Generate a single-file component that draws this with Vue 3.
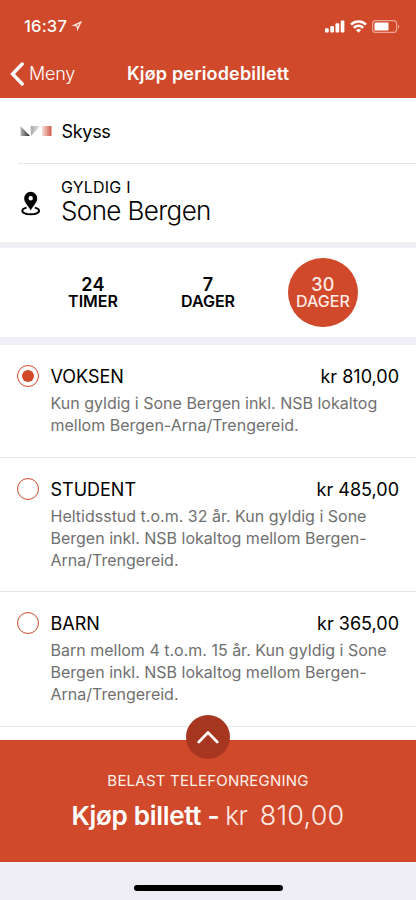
<script setup>
import { ref, computed } from 'vue'

const periods = [
  { n: '24', unit: 'TIMER' },
  { n: '7', unit: 'DAGER' },
  { n: '30', unit: 'DAGER' },
]
const period = ref(2)

const options = [
  { id: 'voksen', name: 'VOKSEN', price: '810,00', lines: ['Kun gyldig i Sone Bergen inkl. NSB lokaltog', 'mellom Bergen-Arna/Trengereid.'] },
  { id: 'student', name: 'STUDENT', price: '485,00', lines: ['Heltidsstud t.o.m. 32 år. Kun gyldig i Sone', 'Bergen inkl. NSB lokaltog mellom Bergen-', 'Arna/Trengereid.'] },
  { id: 'barn', name: 'BARN', price: '365,00', lines: ['Barn mellom 4 t.o.m. 15 år. Kun gyldig i Sone', 'Bergen inkl. NSB lokaltog mellom Bergen-', 'Arna/Trengereid.'] },
]
const selected = ref('voksen')
const total = computed(() => options.find((o) => o.id === selected.value).price)
</script>

<template>
  <div class="screen">
    <header class="header">
      <div class="status">
        <span class="time">16:37</span>
        <svg class="loc" width="12" height="12" viewBox="0 0 12 12"><path d="M11.2.8.4 5.8l5.200.6.6 5z" fill="#fbe0d8" /><path d="M8.300 3.700 5.300 5.200l1.200.3.3 1.200z" fill="#d1492b" /></svg>
        <span class="spacer"></span>
        <svg class="signal" width="20" height="13" viewBox="0 0 20 13" fill="#fff">
          <rect x="0" y="8.2" width="3.7" height="4.4" rx="1" /><rect x="5.3" y="6" width="3.7" height="6.6" rx="1" /><rect x="10.5" y="3.2" width="3.7" height="9.4" rx="1" /><rect x="15.7" y=".5" width="3.7" height="12.1" rx="1" />
        </svg>
        <svg class="wifi" width="17" height="13" viewBox="0 0 17 13" fill="none" stroke="#fff" stroke-width="2.5">
          <path d="M1 4.6a10.7 10.7 0 0 1 15 0" /><path d="M3.8 7.8a6.7 6.7 0 0 1 9.4 0" /><path d="M5.9 10.1a3.8 3.8 0 0 1 5.2 0L8.5 12.7z" fill="#fff" stroke="none" />
        </svg>
        <svg class="battery" width="28" height="13" viewBox="0 0 28 13">
          <rect x=".6" y=".6" width="24" height="11.8" rx="3" fill="none" stroke="#eba795" stroke-width="1.1" /><rect x="2.5" y="2.4" width="14" height="8.2" rx="1.2" fill="#fff" /><path d="M26 4.4c1.6.6 1.6 3.6 0 4.2z" fill="#eba795" />
        </svg>
      </div>
      <nav class="nav">
        <button class="back">
          <svg width="14" height="24" viewBox="0 0 14 24" fill="none" stroke="#fff" stroke-width="3.4" stroke-linecap="round" stroke-linejoin="miter"><path d="M12.200 2 2.600 12l9.600 10" /></svg>
          <span>Meny</span>
        </button>
        <h1>Kjøp periodebillett</h1>
      </nav>
    </header>

    <section class="info">
      <div class="operator">
        <svg width="32" height="10" viewBox="0 0 32 10">
          <defs>
            <linearGradient id="ga"><stop offset="0" stop-color="#bbb" /><stop offset="1" stop-color="#222" /></linearGradient>
            <linearGradient id="gb"><stop offset="0" stop-color="#aaa" /><stop offset="1" stop-color="#e4e4e4" /></linearGradient>
            <linearGradient id="gc"><stop offset="0" stop-color="#f8dfda" /><stop offset="1" stop-color="#d1594a" /></linearGradient>
          </defs>
          <path d="M.5 0 10 10H.5z" fill="url(#ga)" /><path d="M10.5 0H20l-9 10z" fill="url(#gb)" /><rect x="22" y="0" width="9.5" height="10" fill="url(#gc)" />
        </svg>
        <span class="operator-name">Skyss</span>
      </div>
      <div class="zone">
        <svg width="20" height="25" viewBox="0 0 20 25">
          <path d="M5.6 16.6C3 17.2 1.3 18.4 1.3 19.8c0 2.1 3.8 3.5 8.4 3.5s8.4-1.4 8.4-3.5c0-1.4-1.7-2.6-4.3-3.2" fill="none" stroke="#000" stroke-width="1.9" />
          <path fill-rule="evenodd" d="M9.7.8a6.5 6.5 0 0 0-6.5 6.5c0 4.6 4.2 7.3 6.5 12.2 2.3-4.9 6.5-7.6 6.5-12.2A6.5 6.5 0 0 0 9.7.8zm0 4.2a2.2 2.2 0 1 1 0 4.4 2.2 2.2 0 0 1 0-4.4z" />
        </svg>
        <div class="zone-text">
          <span class="zone-label">GYLDIG I</span>
          <span class="zone-name">Sone Bergen</span>
        </div>
      </div>
    </section>

    <section class="periods">
      <button v-for="(p, i) in periods" :key="i" :class="['period', { active: period === i }]" @click="period = i">
        <span class="num">{{ p.n }}</span>
        <span class="unit">{{ p.unit }}</span>
      </button>
    </section>

    <main class="options">
      <article v-for="o in options" :key="o.id" class="option" @click="selected = o.id">
        <span :class="['radio', { on: selected === o.id }]"></span>
        <div class="body">
          <div class="line"><span>{{ o.name }}</span><span>kr {{ o.price }}</span></div>
          <div v-for="l in o.lines" :key="l" class="desc">{{ l }}</div>
        </div>
      </article>
    </main>

    <footer class="buy">
      <button class="expand">
        <svg width="22" height="14" viewBox="0 0 22 14" fill="none" stroke="#fff" stroke-width="2.7" stroke-linecap="round" stroke-linejoin="round"><path d="M1.8 12 11 2.5 20.2 12" /></svg>
      </button>
      <span class="method">BELAST TELEFONREGNING</span>
      <div class="total"><span class="buy-label">Kjøp billett -</span><span class="currency">kr</span><span class="sum">{{ total }}</span></div>
    </footer>
    <div class="home"><span class="bar"></span></div>
  </div>
</template>

<style>
body { margin: 0; }
</style>

<style scoped>
.screen { width: 416px; height: 900px; display: flex; flex-direction: column; background: #fff; color: #000; font-family: Inter, "Liberation Sans", sans-serif; overflow: hidden; white-space: nowrap; }
button { border: 0; padding: 0; margin: 0; background: none; font: inherit; color: inherit; }
svg { display: block; flex: none; }
.header { height: 97.5px; flex: none; background: #d1492b; color: #fff; }
.status { height: 20px; padding: 16px 16px 0 24px; display: flex; align-items: center; }
.time { font-size: 16.5px; font-weight: 550; letter-spacing: 0.2px; }
.loc { margin-left: 4px; }
.spacer { flex: 1; }
.wifi, .battery { margin-left: 5px; }
.nav { height: 44px; margin-top: 15.5px; display: grid; grid-template-columns: 127px 1fr; align-items: center; }
.back { display: flex; align-items: center; gap: 5px; padding-left: 10px; font-size: 18px; font-weight: 300; letter-spacing: -0.2px; }
h1 { margin: 0; font-size: 18px; font-weight: 600; letter-spacing: 0.17px; }
.info { height: 144.5px; flex: none; display: flex; flex-direction: column; }
.operator { height: 66.5px; box-sizing: border-box; margin-left: 18px; padding: 2px 0 0 2px; display: flex; align-items: center; gap: 9.5px; border-bottom: 1px solid #e4e4e6; }
.operator-name { font-size: 18px; letter-spacing: -0.3px; padding-top: 1px; }
.zone { flex: 1; display: flex; align-items: center; gap: 20.5px; padding-left: 20.5px; }
.zone-text { display: flex; flex-direction: column; margin-top: -5px; }
.zone-label { font-size: 16px; line-height: 21px; letter-spacing: 0.2px; }
.zone-name { font-size: 26px; line-height: 26px; font-weight: 300; letter-spacing: -0.6px; }
.periods { height: 89px; flex: none; padding: 0 35.5px; border-top: 6px solid #efeef5; border-bottom: 8px solid #efeef5; display: grid; grid-template-columns: repeat(3, 1fr); justify-items: center; align-items: center; }
.period { width: 69.5px; height: 69.5px; border-radius: 50%; display: flex; flex-direction: column; align-items: center; justify-content: center; font-weight: 600; }
.num { font-size: 18px; line-height: 17px; letter-spacing: 0.2px; }
.unit { font-size: 16px; line-height: 17px; }
.period.active { background: #d1492b; color: #fdeae4; font-weight: 550; }
.period.active .unit { letter-spacing: 0.1px; }
.options { flex: none; height: 395px; }
.option { display: flex; gap: 11.5px; padding: 20px 17px 20.5px; border-bottom: 1px solid #e4e4e6; }
.option .body { flex: 1; padding-top: 1px; }
.radio { box-sizing: border-box; width: 22px; height: 22px; flex: none; border: 1px solid #d1492b; border-radius: 50%; display: grid; place-items: center; }
.radio.on::after { content: ""; width: 12px; height: 12px; border-radius: 50%; background: #d1492b; }
.line { display: flex; justify-content: space-between; height: 22px; line-height: 22px; font-size: 18px; margin-bottom: 4px; }
.desc { height: 22px; line-height: 22px; font-size: 16px; color: #707070; }
.buy { position: relative; height: 122px; flex: none; background: #d1492b; color: #fff; display: flex; flex-direction: column; align-items: center; }
.expand { position: absolute; left: 186px; top: -25.5px; width: 44px; height: 44px; border-radius: 50%; background: #a63620; display: grid; place-items: center; }
.method { margin-top: 31px; font-size: 15px; line-height: 20px; letter-spacing: 0.22px; color: #fff1ec; }
.total { margin-top: 9px; font-size: 26px; line-height: 32px; display: flex; }
.buy-label { font-weight: 600; letter-spacing: -0.3px; }
.currency { margin-left: 6px; font-weight: 300; color: #fdeae4; letter-spacing: -0.5px; }
.sum { margin-left: 12.5px; font-size: 27px; font-weight: 300; color: #fdeae4; letter-spacing: 0.2px; }
.home { flex: 1; background: #efeef5; display: flex; justify-content: center; align-items: flex-start; padding-top: 23px; }
.bar { width: 149px; height: 6px; border-radius: 3px; background: #000; }
</style>
